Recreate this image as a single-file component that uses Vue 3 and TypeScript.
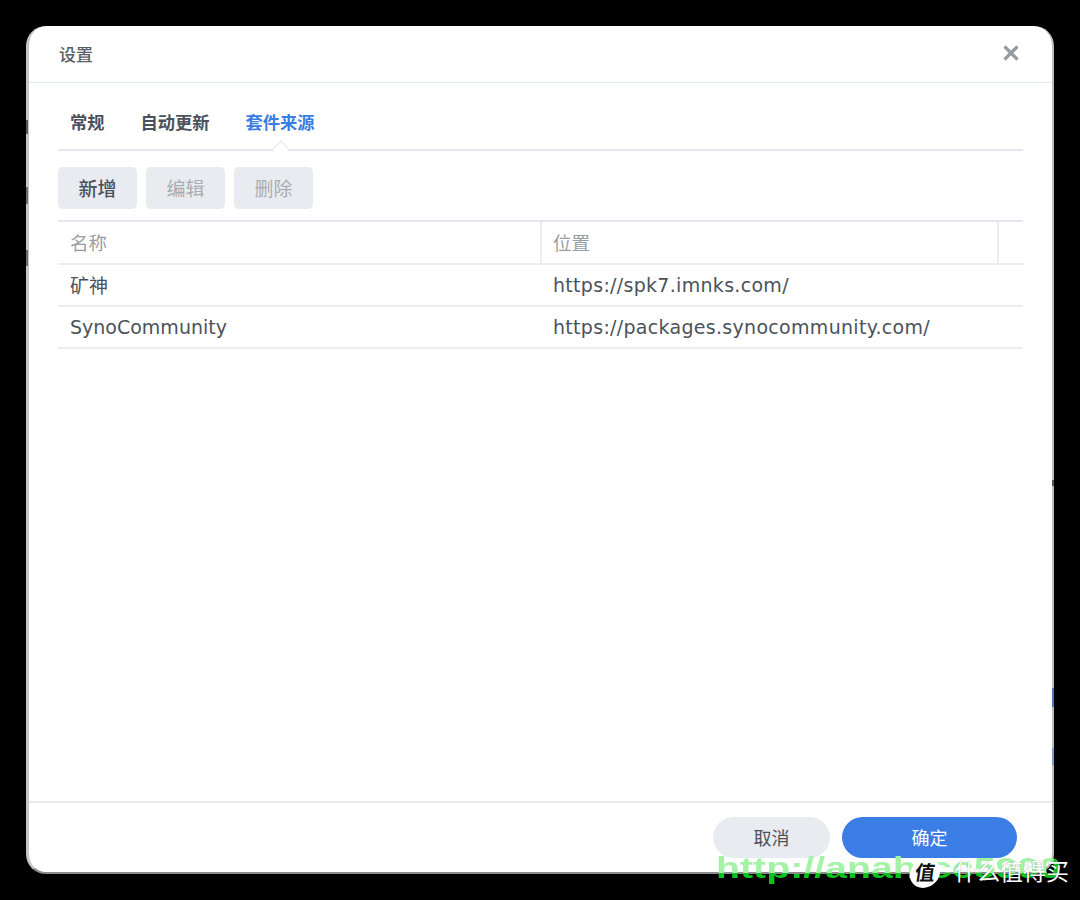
<script setup lang="ts">
import { ref } from 'vue';

interface Source {
  name: string;
  url: string;
}

const tabs = ['常规', '自动更新', '套件来源'];
const activeTab = ref(2);

const sources: Source[] = [
  { name: '矿神', url: 'https://spk7.imnks.com/' },
  { name: 'SynoCommunity', url: 'https://packages.synocommunity.com/' },
];

// bits of the desktop that show through the dialog's translucent edge
const slivers = [
  { left: 26, top: 120, height: 14, color: '#55585c' },
  { left: 26, top: 187, height: 17, color: '#6a6d70' },
  { left: 26, top: 250, height: 16, color: '#6a6d70' },
  { left: 1052, top: 480, height: 6, color: '#55585c' },
  { left: 1052, top: 688, height: 19, color: '#4a76c4' },
  { left: 1052, top: 748, height: 17, color: '#7d98c9' },
];
</script>

<template>
  <div class="page">
    <div class="dialog">
      <div class="title-bar">
        <span class="title">设置</span>
        <svg class="close" width="16" height="16" viewBox="0 0 16 16">
          <path d="M1.5 1.5 L14.5 14.5 M14.5 1.5 L1.5 14.5" stroke="#969ba1" stroke-width="3.2" fill="none" />
        </svg>
      </div>

      <div class="body">
        <div class="tabs">
          <div
            v-for="(tab, index) in tabs"
            :key="tab"
            class="tab"
            :class="{ active: index === activeTab }"
          >
            {{ tab }}
          </div>
        </div>

        <div class="toolbar">
          <button class="tool-btn">新增</button>
          <button class="tool-btn disabled">编辑</button>
          <button class="tool-btn disabled">删除</button>
        </div>

        <div class="table">
          <div class="row head">
            <div class="cell name">名称</div>
            <div class="cell url">位置</div>
            <div class="cell rest"></div>
          </div>
          <div v-for="item in sources" :key="item.name" class="row">
            <div class="cell name">{{ item.name }}</div>
            <div class="cell url link">{{ item.url }}</div>
          </div>
        </div>
      </div>

      <div class="footer">
        <button class="foot-btn cancel">取消</button>
        <button class="foot-btn ok">确定</button>
      </div>
    </div>

    <div
      v-for="s in slivers"
      :key="s.top"
      class="sliver"
      :style="{ left: `${s.left}px`, top: `${s.top}px`, height: `${s.height}px`, background: s.color }"
    ></div>

    <div class="mark-url">http://anahtcc5900</div>
    <div class="mark-logo">
      <span class="mark-circle">值</span>
      <span class="mark-text">什么值得买</span>
    </div>
  </div>
</template>

<style>
body {
  background: #000;
}
</style>

<style scoped>
.page {
  position: relative;
  width: 1080px;
  height: 900px;
  padding: 26px 26px 0;
  box-sizing: border-box;
  background: #000;
  font-family: "DejaVu Sans", "Noto Sans CJK SC", sans-serif;
  overflow: hidden;
}

.dialog {
  width: 1028px;
  height: 848px;
  box-sizing: border-box;
  display: flex;
  flex-direction: column;
  background: #fff;
  border-radius: 20px;
  border-left: 3px solid #c4c6c8;
  border-right: 2px solid #b9bbbd;
  border-bottom: 2px solid #8c8c8c;
  overflow: hidden;
}

.title-bar {
  height: 57px;
  flex-shrink: 0;
  box-sizing: border-box;
  display: flex;
  align-items: center;
  justify-content: space-between;
  padding: 0 33px 2px 30px;
  border-bottom: 1px solid #e3e8ef;
}

.title {
  font-size: 17px;
  font-weight: 500;
  color: #585e66;
}

.body {
  flex: 1;
  padding: 0 29px;
}

.tabs {
  height: 68px;
  box-sizing: border-box;
  display: flex;
  gap: 36px;
  padding: 28px 0 0 12px;
  border-bottom: 2px solid #e2e7ef;
  position: relative;
}

.tab {
  font-size: 17.25px;
  line-height: 24px;
  font-weight: 700;
  color: #4b525b;
}

.tab.active {
  color: #3a7de4;
  position: relative;
}

.tab.active::after {
  content: "";
  position: absolute;
  left: 29px;
  top: 32px;
  width: 11px;
  height: 11px;
  background: #fff;
  border-left: 1.5px solid #e2e7ef;
  border-top: 1.5px solid #e2e7ef;
  transform: rotate(45deg);
}

.toolbar {
  display: flex;
  gap: 9px;
  margin-top: 16px;
}

.tool-btn {
  width: 79px;
  height: 42px;
  border: none;
  border-radius: 5px;
  background: #e8ecf0;
  color: #4b525b;
  font-family: inherit;
  font-size: 19px;
  font-weight: 500;
  padding: 0 0 1px;
}

.tool-btn.disabled {
  color: #a9adb2;
  font-weight: 400;
}

.table {
  margin-top: 11px;
  border-top: 2px solid #e2e7ef;
}

.row {
  height: 42px;
  box-sizing: border-box;
  display: flex;
  align-items: center;
  border-bottom: 2px solid #eaeef3;
  font-size: 19px;
  color: #4b525b;
}

.row.head {
  height: 43px;
}

.cell {
  height: 100%;
  display: flex;
  align-items: center;
  padding-left: 12px;
  box-sizing: border-box;
}

.row:nth-child(2) .name {
  padding-bottom: 2px;
}

.name {
  width: 482px;
}

.url {
  flex: 1;
}

.link {
  padding-left: 13px;
  letter-spacing: 0.3px;
}

.rest {
  width: 24px;
  flex: none;
  padding: 0;
}

.head {
  color: #989da3;
  font-size: 18.5px;
}

.head .cell {
  padding-bottom: 2px;
}

.head .url {
  border-left: 2px solid #eaeef3;
  border-right: 2px solid #eaeef3;
  padding-left: 11px;
}

.footer {
  height: 71px;
  flex-shrink: 0;
  box-sizing: border-box;
  display: flex;
  justify-content: flex-end;
  gap: 12px;
  padding: 14px 35px 0 0;
  border-top: 2px solid #e8ecf1;
}

.foot-btn {
  height: 41px;
  border: none;
  border-radius: 21px;
  font-family: inherit;
  font-size: 18px;
  padding: 0 0 2px;
}

.cancel {
  width: 117px;
  background: #e8ecf0;
  color: #4b525b;
}

.ok {
  width: 175px;
  background: #3a7de4;
  color: #fff;
}

.sliver {
  position: absolute;
  width: 2px;
}

.mark-url {
  position: absolute;
  left: 716px;
  top: 846px;
  height: 46px;
  font-family: "Liberation Sans", sans-serif;
  font-size: 30px;
  line-height: 44px;
  font-weight: 700;
  white-space: nowrap;
  transform: scaleX(1.31);
  transform-origin: left top;
  /* pale over the dialog, solid over the black surround */
  background-image:
    linear-gradient(to right, transparent 258px, #0dc21f 258px),
    linear-gradient(to bottom, #a3f2a6 27px, #0dc21f 27px);
  -webkit-background-clip: text;
  background-clip: text;
  color: transparent;
}

.mark-logo {
  position: absolute;
  left: 910px;
  top: 858px;
  display: flex;
  align-items: center;
  gap: 14px;
}

.mark-circle {
  width: 30px;
  height: 30px;
  border-radius: 50%;
  background: #fff;
  color: #111;
  font-size: 20px;
  font-weight: 700;
  line-height: 30px;
  text-align: center;
  transform: skewX(-8deg);
}

.mark-text {
  font-size: 23px;
  line-height: 28px;
  color: #fff;
  white-space: nowrap;
  text-shadow: 0 0 1px rgba(0, 0, 0, 0.45);
  margin-top: -3px;
}
</style>
